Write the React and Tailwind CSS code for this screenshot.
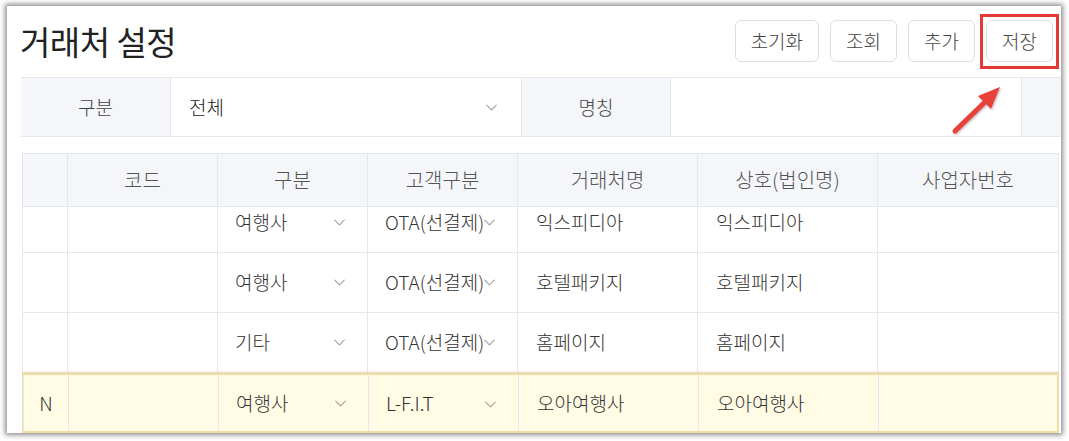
import React from "react";
import { ChevronDown } from "lucide-react";

const font = { fontFamily: '"Noto Sans CJK KR", "Noto Sans", sans-serif' };

const columns = [
  { key: "flag", label: "", w: "w-[45px]" },
  { key: "code", label: "코드", w: "w-[150px]" },
  { key: "type", label: "구분", w: "w-[150px]" },
  { key: "cust", label: "고객구분", w: "w-[150px]" },
  { key: "name", label: "거래처명", w: "w-[180px]" },
  { key: "corp", label: "상호(법인명)", w: "w-[180px]" },
  { key: "biz", label: "사업자번호", w: "w-[182px]" },
];

const rows = [
  { flag: "", type: "여행사", cust: "OTA(선결제)", name: "익스피디아", corp: "익스피디아" },
  { flag: "", type: "여행사", cust: "OTA(선결제)", name: "호텔패키지", corp: "호텔패키지" },
  { flag: "", type: "기타", cust: "OTA(선결제)", name: "홈페이지", corp: "홈페이지" },
  { flag: "N", type: "여행사", cust: "L-F.I.T", name: "오아여행사", corp: "오아여행사", active: true },
];

const Chevron = ({ className = "" }) => (
  <ChevronDown size={19} strokeWidth={1.3} className={"text-[#9e9e9e] " + className} />
);

const Button = ({ children }) => (
  <button className="h-[42px] px-[15px] rounded-md border border-[#dcdfe3] bg-white text-[19px] font-light text-[#444]">
    {children}
  </button>
);

const App = () => {
  return (
    <div className="w-[1069px] h-[441px] bg-white pl-[7px] pt-[6px]" style={font}>
      <div className="relative w-[1054px] h-[427px] bg-white overflow-hidden shadow-[0_0_5px_2px_rgba(0,0,0,0.45)]">
        <div className="flex items-center justify-between pl-[13px] pr-[8px] pt-[14px]">
          <h1 className="text-[33px] leading-[42px] text-[#222] tracking-[-0.5px]">거래처 설정</h1>
          <div className="flex gap-[11px]">
            <Button>초기화</Button>
            <Button>조회</Button>
            <Button>추가</Button>
            <Button>저장</Button>
          </div>
        </div>

        <div className="ml-[14px] mt-[15px] flex h-[60px] border-y border-[#e4e7eb] text-[19px] font-light">
          <div className="w-[150px] shrink-0 bg-[#f4f6f9] flex items-center justify-center text-[#444] border-r border-[#e4e7eb]">
            구분
          </div>
          <div className="w-[350px] shrink-0 flex items-center justify-between pl-[18px] pr-[20px] text-[#222]">
            <span>전체</span>
            <Chevron />
          </div>
          <div className="w-[150px] shrink-0 bg-[#f4f6f9] flex items-center justify-center text-[#444] border-x border-[#e4e7eb]">
            명칭
          </div>
          <div className="w-[350px] shrink-0" />
          <div className="flex-1 bg-[#f4f6f9] border-l border-[#e4e7eb]" />
        </div>

        <div className="ml-[15px] mt-[16px] w-[1037px] border-t border-[#e4e7eb]">
          <div className="flex h-[53px] bg-[#f4f6f9] border-b border-[#e4e7eb] text-[20px] font-light text-[#555]">
            {columns.map((c, i) => (
              <div
                key={c.key}
                className={`${c.w} shrink-0 flex items-center justify-center border-l border-[#e4e7eb] ${i === columns.length - 1 ? "border-r" : ""}`}
              >
                {c.label}
              </div>
            ))}
          </div>
          <div className="h-[230px] overflow-hidden">
            <div className="-mt-[14px] text-[19px] font-light text-[#333]">
              {rows.map((r, ri) => (
                <div
                  key={ri}
                  className={
                    r.active
                      ? "flex h-[60px] -ml-[1px] bg-[#fffbe4] border-2 border-[#efdfa6] shadow-[0_0_3px_rgba(230,200,120,0.8)]"
                      : "flex h-[60px] border-b border-[#e4e7eb]"
                  }
                >
                  <div className="w-[45px] shrink-0 flex items-center justify-center border-l border-[#e4e7eb]">
                    {r.flag}
                  </div>
                  <div className="w-[150px] shrink-0 border-l border-[#e4e7eb]" />
                  <div className="w-[150px] shrink-0 flex items-center justify-between pl-[17px] pr-[18px] border-l border-[#e4e7eb]">
                    <span>{r.type}</span>
                    <Chevron />
                  </div>
                  <div className="w-[150px] shrink-0 flex items-center pl-[17px] border-l border-[#e4e7eb] relative">
                    <span className="whitespace-nowrap">{r.cust}</span>
                    <Chevron className="absolute left-[112px] top-[20px]" />
                  </div>
                  <div className="w-[180px] shrink-0 flex items-center pl-[18px] border-l border-[#e4e7eb]">
                    {r.name}
                  </div>
                  <div className="w-[180px] shrink-0 flex items-center pl-[18px] border-l border-[#e4e7eb]">
                    {r.corp}
                  </div>
                  <div className="w-[182px] shrink-0 border-x border-[#e4e7eb]" />
                </div>
              ))}
            </div>
          </div>
        </div>

        <div className="absolute left-[973px] top-[8px] w-[79px] h-[55px] border-[3px] border-[#e53935]" />
        <svg className="absolute left-[935px] top-[72px]" width="70" height="65" viewBox="0 0 70 65">
          <defs>
            <filter id="s" x="-20%" y="-20%" width="140%" height="140%">
              <feDropShadow dx="1" dy="1" stdDeviation="1" floodOpacity="0.3" />
            </filter>
          </defs>
          <g filter="url(#s)">
            <line x1="13" y1="53" x2="44" y2="23" stroke="#e8403a" strokeWidth="5" strokeLinecap="round" />
            <polygon points="58,9 36,18 49,31" fill="#e8403a" />
          </g>
        </svg>
      </div>
    </div>
  );
};

export default App;
